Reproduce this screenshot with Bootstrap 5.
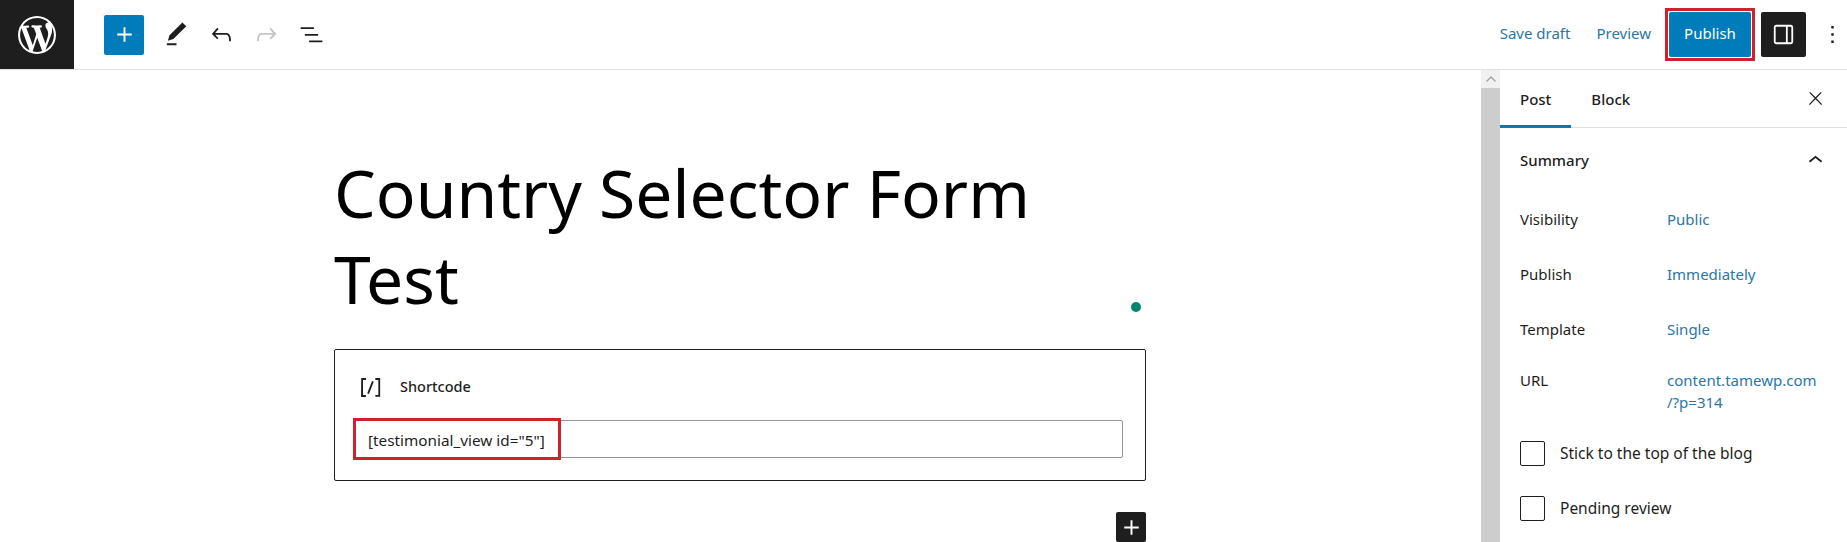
<!doctype html>
<html lang="en"><head><meta charset="utf-8"><title>Country Selector Form Test</title>
<link href="https://cdn.jsdelivr.net/npm/bootstrap@5.3.0/dist/css/bootstrap.min.css" rel="stylesheet">
<style>
html,body{height:542px;overflow:hidden;background:#fff}
body{font-family:"Noto Sans",sans-serif;font-size:15px;color:#1e1e1e}
svg{fill:currentColor;display:block}
.topbar{height:70px;border-bottom:1px solid #e0e0e0}
.wp-logo{width:74px;height:69px;background:#1e1e1e;color:#fff}
.inserter{width:40px;height:40px;margin:0 10px 0 30px;padding:0;background:#007cba;border:0;border-radius:2px;color:#fff}
.tool{width:45px;height:45px;padding:0;border:0;background:none;color:#1e1e1e}
.tool.off{color:#c4c4c4}
.linkish{color:#2a76a8;text-decoration:none}
.save-link{margin-right:26px;padding-bottom:2px}
.preview-link{margin-right:18px;padding-bottom:2px}
.pub-wrap{margin-right:10px}
.publish{width:82px;height:45px;padding:0 0 2px;background:#007cba;border:0;border-radius:2px;color:#fff;font-size:15px}
.hl-pub{inset:-4px;border:3px solid #d0202e}
.panel-toggle{width:45px;height:45px;padding:0;border:0;border-radius:2px;background:#1e1e1e;color:#fff}
.more-btn{width:41px;color:#1e1e1e}
.workspace{height:472px}
.canvas{padding:0 0 0 334px;min-width:0}
.title-box{width:812px;height:279px;padding:79px 0 0}
.post-title{font-size:66px;line-height:86px;font-weight:400;color:#000;margin:0;font-family:"Noto Sans",sans-serif;width:760px}
.save-dot{width:10px;height:10px;right:5px;top:232px;background:#00856f}
.sc-block{width:812px;height:132px;border:1px solid #1e1e1e;border-radius:2px;padding:0 22px 0 19px}
.sc-head{height:70px;padding-top:4px}
.sc-icon{margin-right:15px;margin-left:2px}
.sc-label{font-size:14.5px;font-weight:500}
.sc-input{height:38px;border:1px solid #949494;border-radius:2px;padding:0 13px;font-size:15.3px;line-height:38px;color:#1e1e1e}
.hl-sc{left:-1px;top:-2px;width:208px;height:42px;border:3px solid #d0202e}
.add-row{margin-top:31px;width:812px}
.add-block{width:30px;height:30px;padding:0;background:#1e1e1e;border:0;border-radius:2px;color:#fff}
.fake-scroll{width:19px;background:#cdcdcd}
.scroll-cap{height:18px;background:#f1f1f1;color:#a3a3a3}
.side{width:347px}
.side-tabs{height:58px;border-bottom:1px solid #e0e0e0}
.side-tab{height:58px;padding:0 20px;line-height:58px;margin-bottom:-1px;color:#1e1e1e;font-weight:500}
.side-tab.on{border-bottom:3px solid #007cba}
.side-close{width:64px}
.sec-head{height:64px;padding:0 17px 0 20px;font-weight:500;font-size:15px}
.sec-body{padding:0 20px}
.meta-row{height:55px}
.meta-key{width:147px;flex:none}
.url-row{height:69px;line-height:22px;padding-top:12px}
.chk{margin:0;height:55px;font-size:15.5px}
.chk .form-check-input{width:25px;height:25px;margin:0 15px 0 0;border:1px solid #1e1e1e;border-radius:2px;float:none;flex:none}
</style></head>
<body>
<header class="topbar d-flex align-items-start">
  <div class="wp-logo d-flex align-items-center justify-content-center">
    <svg width="38" height="38" viewBox="0 0 20 20"><path d="M20 10c0-5.51-4.49-10-10-10C4.48 0 0 4.49 0 10c0 5.52 4.48 10 10 10 5.51 0 10-4.48 10-10zM7.78 15.37L4.37 6.22c.55-.02 1.17-.08 1.17-.08.5-.06.44-1.13-.06-1.11 0 0-1.45.11-2.37.11-.18 0-.37 0-.58-.01C4.12 2.69 6.87 1.11 10 1.11c2.33 0 4.45.87 6.05 2.34-.68-.11-1.65.39-1.65 1.58 0 .74.45 1.36.9 2.1.35.61.55 1.36.55 2.46 0 1.49-1.4 5-1.4 5l-3.03-8.37c.54-.02.82-.17.82-.17.5-.05.44-1.25-.06-1.22 0 0-1.44.12-2.38.12-.87 0-2.33-.12-2.33-.12-.5-.03-.56 1.2-.06 1.22l.92.08 1.26 3.41zM17.41 10c.24-.64.74-1.87.43-4.25.7 1.29 1.05 2.71 1.05 4.25 0 3.29-1.73 6.24-4.4 7.78.97-2.59 1.94-5.2 2.92-7.78zM6.1 18.09C3.12 16.65 1.11 13.53 1.11 10c0-1.3.23-2.48.72-3.59C3.25 10.3 4.67 14.2 6.1 18.09zm4.03-6.63l2.58 6.98c-.86.29-1.76.45-2.71.45-.79 0-1.57-.11-2.29-.33.81-2.38 1.62-4.74 2.42-7.1z"/></svg>
  </div>
  <div class="d-flex align-items-center h-100 flex-grow-1">
    <button class="btn inserter d-flex align-items-center justify-content-center" aria-label="Add block"><svg width="29" height="29" viewBox="0 0 24 24"><path d="M18 11.2h-5.2V6h-1.6v5.2H6v1.6h5.2V18h1.6v-5.2H18z"/></svg></button>
    <button class="btn tool d-flex align-items-center justify-content-center" aria-label="Tools"><svg width="29" height="29" viewBox="0 0 24 24"><path d="M20.1 5.1L16.9 2 6.2 12.7l-1.3 4.4 4.5-1.3L20.1 5.1zM4 20.8h8v-1.5H4v1.5z"/></svg></button>
    <button class="btn tool d-flex align-items-center justify-content-center" aria-label="Undo"><svg width="29" height="29" viewBox="0 0 24 24"><path d="M18.3 11.7c-.6-.6-1.4-.9-2.3-.9H6.7l2.9-3.3-1.1-1-4.5 5L8.5 16l1-1-2.7-2.7H16c.5 0 .9.2 1.3.5 1 1 1 3.4 1 4.5v.3h1.5v-.2c0-1.5 0-4.3-1.5-5.7z"/></svg></button>
    <button class="btn tool off d-flex align-items-center justify-content-center" aria-label="Redo"><svg width="29" height="29" viewBox="0 0 24 24"><path d="M15.6 6.5l-1.1 1 2.9 3.3H8c-.9 0-1.7.3-2.3.9-1.4 1.5-1.4 4.2-1.4 5.6v.2h1.5v-.3c0-1.1 0-3.5 1-4.5.3-.3.7-.5 1.3-.5h9.2L14.5 15l1.1 1.1 4.6-4.6-4.6-5z"/></svg></button>
    <button class="btn tool d-flex align-items-center justify-content-center" aria-label="List view"><svg width="29" height="29" viewBox="0 0 24 24"><path d="M3 6h11v1.5H3V6Zm3.5 5.5h11V13h-11v-1.5ZM21 17H10v1.5h11V17Z"/></svg></button>
    <div class="ms-auto d-flex align-items-center">
      <a class="linkish save-link" href="#">Save draft</a>
      <a class="linkish preview-link" href="#">Preview</a>
      <div class="pub-wrap position-relative">
        <button class="btn publish">Publish</button>
        <span class="hl-pub position-absolute"></span>
      </div>
      <button class="btn panel-toggle d-flex align-items-center justify-content-center" aria-label="Settings"><svg width="29" height="29" viewBox="0 0 24 24"><path d="M18 4H6c-1.1 0-2 .9-2 2v12c0 1.1.9 2 2 2h12c1.1 0 2-.9 2-2V6c0-1.1-.9-2-2-2zM6 18.5a.5.5 0 0 1-.5-.5V6a.5.5 0 0 1 .5-.5h8v13H6zm12.5-.5a.5.5 0 0 1-.5.5h-2.5v-13H18a.5.5 0 0 1 .5.5v12z"/></svg></button>
      <div class="more-btn d-flex align-items-center justify-content-end"><svg width="29" height="29" viewBox="0 0 24 24"><path d="M13 19h-2v-2h2v2zm0-6h-2v-2h2v2zm0-6h-2V5h2v2z"/></svg></div>
    </div>
  </div>
</header>
<div class="workspace d-flex">
  <main class="canvas flex-grow-1">
    <div class="title-box position-relative">
      <h1 class="post-title">Country Selector Form Test</h1>
      <span class="save-dot position-absolute rounded-circle"></span>
    </div>
    <section class="sc-block">
      <div class="sc-head d-flex align-items-center">
        <svg class="sc-icon" width="29" height="29" viewBox="0 0 24 24"><path d="M16 4.2v1.5h2.5v12.5H16v1.5h4V4.2h-4zM4.2 19.8h4v-1.5H5.8V5.8h2.5V4.2h-4l-.1 15.6zm5.1-3.1l1.4.6 4-10-1.4-.6-4 10z"/></svg>
        <span class="sc-label">Shortcode</span>
      </div>
      <div class="position-relative">
        <div class="sc-input">[testimonial_view id="5"]</div>
        <span class="hl-sc position-absolute"></span>
      </div>
    </section>
    <div class="add-row d-flex justify-content-end">
      <button class="btn add-block d-flex align-items-center justify-content-center" aria-label="Add block"><svg width="29" height="29" viewBox="0 0 24 24"><path d="M18 11.2h-5.2V6h-1.6v5.2H6v1.6h5.2V18h1.6v-5.2H18z"/></svg></button>
    </div>
  </main>
  <div class="fake-scroll flex-shrink-0">
    <div class="scroll-cap d-flex align-items-center justify-content-center"><svg width="10" height="6" viewBox="0 0 10 6"><path d="M5 0l5 5-1 1-4-4-4 4-1-1z"/></svg></div>
  </div>
  <aside class="side flex-shrink-0">
    <div class="side-tabs d-flex align-items-start">
      <div class="side-tab on">Post</div>
      <div class="side-tab">Block</div>
      <div class="side-close ms-auto d-flex align-items-center justify-content-center h-100"><svg width="21" height="21" viewBox="0 0 24 24"><path d="M13 11.8l6.1-6.3-1-1-6.1 6.2-6.1-6.2-1 1 6.1 6.3-6.5 6.7 1 1 6.5-6.6 6.5 6.6 1-1z"/></svg></div>
    </div>
    <div class="sec-head d-flex align-items-center justify-content-between">
      <span>Summary</span>
      <svg width="29" height="29" viewBox="0 0 24 24"><path d="M6.5 12.4L12 8l5.5 4.4-.9 1.2L12 10l-4.5 3.6-1-1.2z"/></svg>
    </div>
    <div class="sec-body">
      <div class="meta-row d-flex align-items-center"><div class="meta-key">Visibility</div><a class="linkish" href="#">Public</a></div>
      <div class="meta-row d-flex align-items-center"><div class="meta-key">Publish</div><a class="linkish" href="#">Immediately</a></div>
      <div class="meta-row d-flex align-items-center"><div class="meta-key">Template</div><a class="linkish" href="#">Single</a></div>
      <div class="url-row d-flex align-items-start"><div class="meta-key">URL</div><a class="linkish" href="#">content.tamewp.com<br>/?p=314</a></div>
      <div class="chk d-flex align-items-center"><input class="form-check-input" type="checkbox" id="c1"><label for="c1">Stick to the top of the blog</label></div>
      <div class="chk d-flex align-items-center"><input class="form-check-input" type="checkbox" id="c2"><label for="c2">Pending review</label></div>
    </div>
  </aside>
</div>
</body></html>
